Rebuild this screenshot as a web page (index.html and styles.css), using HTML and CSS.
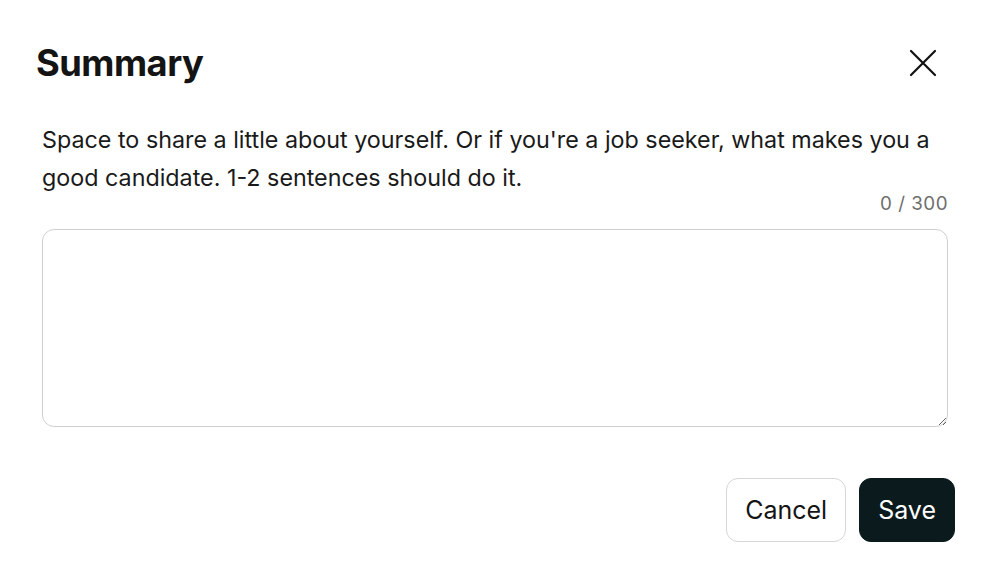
FILE: index.html
```html
<!DOCTYPE html>
<html lang="en">
<head>
    <meta charset="UTF-8">
    <title>Summary</title>
    <link rel="stylesheet" href="styles.css">
</head>
<body>
    <div class="dialog">
        <div class="header">
            <h1>Summary</h1>
            <button class="close" aria-label="Close">
                <svg width="28" height="28" viewBox="0 0 28 28">
                    <path d="M2 2 L26 26 M26 2 L2 26" stroke="#111" stroke-width="2.2" stroke-linecap="round" fill="none"/>
                </svg>
            </button>
        </div>
        <div class="body">
            <p class="hint">Space to share a little about yourself. Or if you're a job seeker, what makes you a good candidate. 1-2 sentences should do it.</p>
            <div class="count">0 / 300</div>
            <textarea class="field"></textarea>
        </div>
        <div class="actions">
            <button class="btn cancel">Cancel</button>
            <button class="btn save">Save</button>
        </div>
    </div>
</body>
</html>
```

FILE: styles.css
```css
* {
    box-sizing: border-box;
    margin: 0;
    padding: 0;
}
body {
    background: #fff;
    font-family: Inter, "Noto Sans", sans-serif;
    color: #111;
}
.dialog {
    width: 994px;
    padding: 38px 39px 0 36px;
}
.header {
    display: flex;
    justify-content: space-between;
    align-items: center;
    height: 50px;
}
h1 {
    font-size: 36.3px;
    font-weight: 700;
    letter-spacing: -0.5px;
    color: #141414;
}
.close {
    border: none;
    background: none;
    width: 28px;
    height: 28px;
    margin-right: 18px;
}
.body {
    padding: 0 7px 0 6px;
    margin-top: 33px;
}
.hint {
    font-size: 23.3px;
    line-height: 38px;
    color: #1a1a1a;
}
.count {
    text-align: right;
    font-size: 18.8px;
    color: #6e6e6e;
    letter-spacing: 0.5px;
    margin-top: -4px;
    line-height: 22px;
}
.field {
    display: block;
    width: 100%;
    height: 198px;
    margin-top: 14px;
    border: 1px solid #cfcfcf;
    border-radius: 12px;
    resize: vertical;
    font-family: inherit;
    font-size: 18px;
}
.actions {
    display: flex;
    justify-content: flex-end;
    gap: 13px;
    margin-top: 51px;
}
.btn {
    height: 64px;
    border-radius: 12px;
    font-family: inherit;
    font-size: 25px;
    padding: 0 18px;
}
.cancel {
    background: #fff;
    border: 1px solid #d6d6d6;
    color: #141414;
}
.save {
    background: #0b1a1c;
    border: 1px solid #0b1a1c;
    color: #fff;
}
```
